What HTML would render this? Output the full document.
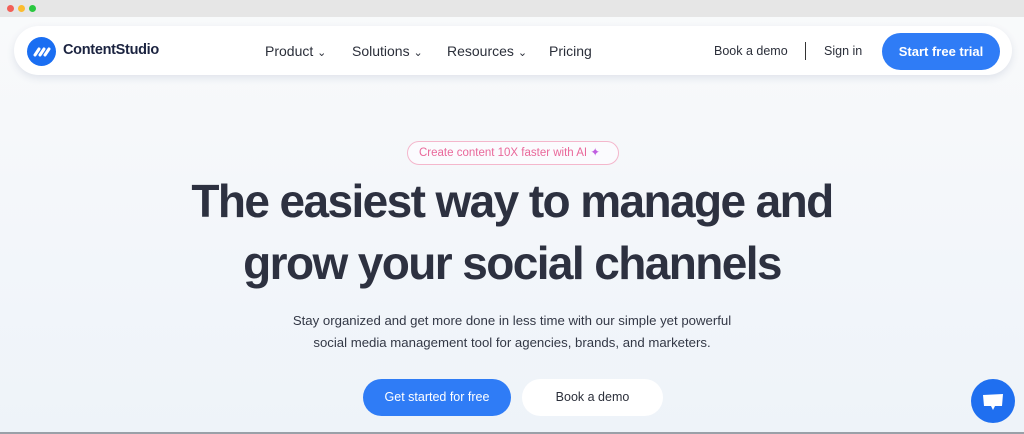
<!DOCTYPE html><html><head><style>
*{margin:0;padding:0;box-sizing:border-box}
body{width:1024px;height:434px;overflow:hidden;font-family:"Liberation Sans",sans-serif;background:linear-gradient(#f9fafb,#eef3f9);position:relative;color:#2b2f3a}
.bar{height:17px;background:#e6e6e6;position:relative}
.dot{position:absolute;top:5px;width:7px;height:7px;border-radius:50%}
.nav{position:absolute;left:14px;top:26px;width:998px;height:49px;background:#fff;border-radius:25px;box-shadow:0 3px 8px rgba(60,70,120,.12)}
.logo{position:absolute;left:13px;top:11px;width:29px;height:29px;border-radius:50%;background:#1a6ef2}
.brand{position:absolute;left:49px;top:16px;font-size:14.5px;font-weight:bold;color:#1b2340;letter-spacing:-.3px}
.m{position:absolute;top:17px;font-size:14px;color:#2b2f3a}
.cta{position:absolute;left:868px;top:7px;width:118px;height:37px;border-radius:19px;background:#2f7cf6;color:#fff;font-size:13px;font-weight:bold;text-align:center;line-height:37px}
.pill{position:absolute;left:407px;top:141px;width:212px;height:24px;border:1px solid #f4b7cc;border-radius:12px;font-size:11.5px;color:#e9689a;line-height:22px;padding-left:11px;background:#fbfbfe}
h1{position:absolute;left:0;width:1024px;text-align:center;font-size:46px;letter-spacing:-1.6px;font-weight:bold;color:#2d3140;line-height:62px;top:170px}
p{position:absolute;left:0;width:1024px;text-align:center;top:310px;font-size:13.2px;line-height:22px;color:#333846}
.b1{position:absolute;left:363px;top:379px;width:148px;height:37px;border-radius:19px;background:#2f7cf6;color:#fff;font-size:12.5px;text-align:center;line-height:37px}
.b2{position:absolute;left:522px;top:379px;width:141px;height:37px;border-radius:19px;background:#fff;color:#2b2f3a;font-size:12.5px;text-align:center;line-height:37px}
.chat{position:absolute;left:971px;top:379px;width:44px;height:44px;border-radius:50%;background:#1f6ff0}
</style></head><body>
<div class="bar"><div class="dot" style="left:7px;background:#f25f57"></div><div class="dot" style="left:18px;background:#fbbc2f"></div><div class="dot" style="left:29px;background:#2ac840"></div></div>
<div class="nav">
<div class="logo"><svg width="29" height="29"><g stroke="#fff" stroke-width="3" stroke-linecap="round"><line x1="8" y1="18" x2="12" y2="12"/><line x1="13" y1="18" x2="17" y2="12"/><line x1="18" y1="18" x2="22" y2="12"/></g></svg></div>
<div class="brand">ContentStudio</div>
<div class="m" style="left:251px">Product <span style="font-size:11px">&#8964;</span></div>
<div class="m" style="left:338px">Solutions <span style="font-size:11px">&#8964;</span></div>
<div class="m" style="left:433px">Resources <span style="font-size:11px">&#8964;</span></div>
<div class="m" style="left:535px">Pricing</div>
<div class="m" style="left:700px;font-size:12.5px;top:18px">Book a demo</div>
<div style="position:absolute;left:791px;top:16px;width:1px;height:18px;background:#333"></div>
<div class="m" style="left:810px;font-size:12.5px;top:18px">Sign in</div>
<div class="cta">Start free trial</div>
</div>
<div class="pill">Create content 10X faster with AI <span style="color:#c05ee0">✦</span></div>
<h1>The easiest way to manage and<br>grow your social channels</h1>
<p>Stay organized and get more done in less time with our simple yet powerful<br>social media management tool for agencies, brands, and marketers.</p>
<div class="b1">Get started for free</div>
<div class="b2">Book a demo</div>
<div class="chat"><svg width="44" height="44"><path d="M12 16 L32 15 L31 27 L24 27 L22 31 L20 27 L13 27Z" fill="#fff"/></svg></div>
<div style="position:absolute;left:0;top:432px;width:1024px;height:2px;background:#9aa0a8"></div>
</body></html>
